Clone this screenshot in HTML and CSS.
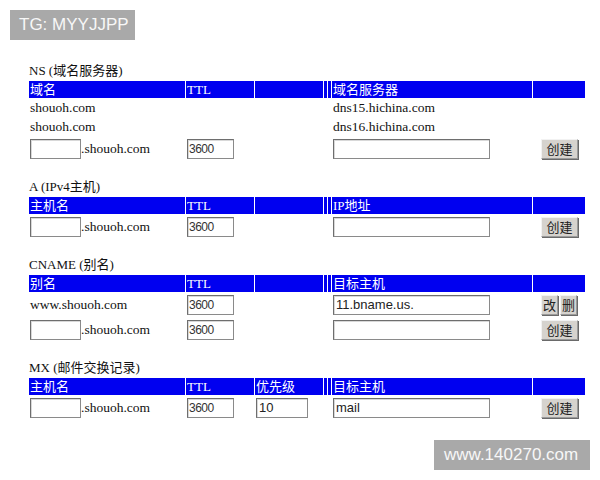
FILE: index.html
```html
<!DOCTYPE html>
<html>
<head>
<meta charset="utf-8">
<link rel="stylesheet" href="styles.css">
</head>
<body>
<div class="badge badge-top">TG: MYYJJPP</div>

<main class="page">
  <section class="sec">
    <div class="title">NS (域名服务器)</div>
    <div class="row head"><div>域名</div><div>TTL</div><div></div><div></div><div></div><div>域名服务器</div><div></div></div>
    <div class="row text"><div>shouoh.com</div><div></div><div></div><div></div><div></div><div>dns15.hichina.com</div><div></div></div>
    <div class="row text"><div>shouoh.com</div><div></div><div></div><div></div><div></div><div>dns16.hichina.com</div><div></div></div>
    <div class="row field">
      <div class="name"><span class="inp w-name"></span>.shouoh.com</div>
      <div><span class="inp w-ttl">3600</span></div><div></div><div></div><div></div>
      <div><span class="inp w-val"></span></div>
      <div class="btns"><span class="btn">创建</span></div>
    </div>
  </section>

  <section class="sec">
    <div class="title">A (IPv4主机)</div>
    <div class="row head"><div>主机名</div><div>TTL</div><div></div><div></div><div></div><div>IP地址</div><div></div></div>
    <div class="row field">
      <div class="name"><span class="inp w-name"></span>.shouoh.com</div>
      <div><span class="inp w-ttl">3600</span></div><div></div><div></div><div></div>
      <div><span class="inp w-val"></span></div>
      <div class="btns"><span class="btn">创建</span></div>
    </div>
  </section>

  <section class="sec">
    <div class="title">CNAME (别名)</div>
    <div class="row head"><div>别名</div><div>TTL</div><div></div><div></div><div></div><div>目标主机</div><div></div></div>
    <div class="row field">
      <div class="name">www.shouoh.com</div>
      <div><span class="inp w-ttl">3600</span></div><div></div><div></div><div></div>
      <div><span class="inp w-val big">11.bname.us.</span></div>
      <div class="btns"><span class="btn sm">改</span><span class="btn sm">删</span></div>
    </div>
    <div class="row field">
      <div class="name"><span class="inp w-name"></span>.shouoh.com</div>
      <div><span class="inp w-ttl">3600</span></div><div></div><div></div><div></div>
      <div><span class="inp w-val"></span></div>
      <div class="btns"><span class="btn">创建</span></div>
    </div>
  </section>

  <section class="sec">
    <div class="title">MX (邮件交换记录)</div>
    <div class="row head"><div>主机名</div><div>TTL</div><div>优先级</div><div></div><div></div><div>目标主机</div><div></div></div>
    <div class="row field">
      <div class="name"><span class="inp w-name"></span>.shouoh.com</div>
      <div><span class="inp w-ttl">3600</span></div>
      <div><span class="inp w-pri big">10</span></div><div></div><div></div>
      <div><span class="inp w-val big">mail</span></div>
      <div class="btns"><span class="btn">创建</span></div>
    </div>
  </section>
</main>

<div class="badge badge-bottom">www.140270.com</div>
</body>
</html>
```

FILE: styles.css
```css
html, body {
  margin: 0;
  padding: 0;
  background: #ffffff;
}

body {
  width: 600px;
  height: 480px;
  position: relative;
  overflow: hidden;
  font-family: "Liberation Serif", "Noto Sans CJK SC", serif;
  font-size: 13.5px;
  color: #111111;
}

.badge {
  position: absolute;
  background: #a9a9a9;
  color: #f7f7f7;
  font-family: "Liberation Sans", Arial, sans-serif;
  height: 30px;
  line-height: 30px;
  box-sizing: border-box;
}

.badge-top {
  left: 10px;
  top: 10px;
  width: 125px;
  padding-left: 9px;
  font-size: 17px;
}

.badge-bottom {
  left: 434px;
  top: 440px;
  width: 156px;
  padding-left: 10px;
  font-size: 17px;
}

.page {
  padding: 61px 0 0 29px;
}

.sec {
  margin-bottom: 16px;
}

.title {
  height: 20px;
  line-height: 20px;
  font-size: 13px;
  color: #111;
}

.row {
  display: grid;
  grid-template-columns: 156px 68px 68px 3px 3px 200px 52px;
  column-gap: 1px;
  margin-bottom: 1px;
}

.head {
  height: 17px;
}

.head > div {
  background: #0000f0;
  color: #ffffff;
  line-height: 17px;
  padding-left: 1px;
  white-space: nowrap;
  overflow: hidden;
  font-size: 13px;
}

.text {
  height: 18px;
  line-height: 18px;
}

.text > div {
  padding-left: 1px;
}

.field {
  height: 24px;
  align-items: center;
}

.field > div {
  display: flex;
  align-items: center;
  padding-left: 1px;
  white-space: nowrap;
}

.inp {
  display: inline-block;
  box-sizing: border-box;
  height: 20px;
  line-height: 18px;
  border: 1px solid #8a8a8a;
  border-top-color: #6e6e6e;
  border-left-color: #6e6e6e;
  box-shadow: inset 1px 1px 0 #d8d8d8;
  background: #ffffff;
  font-family: "Liberation Sans", Arial, sans-serif;
  font-size: 12px;
  color: #333;
  padding-left: 1px;
  letter-spacing: -0.5px;
}

.inp.big {
  font-size: 13px;
  letter-spacing: 0;
  padding-left: 2px;
  color: #222;
}

.w-name { width: 51px; }
.w-ttl { width: 47px; }
.w-pri { width: 52px; }
.w-val { width: 157px; }

.btns {
  padding-left: 8px !important;
}

.btn {
  display: inline-block;
  box-sizing: border-box;
  height: 20px;
  line-height: 18px;
  width: 37px;
  text-align: center;
  background: #d6d3ce;
  border: 1px solid #9a9a9a;
  border-top-color: #f2f2f2;
  border-left-color: #f2f2f2;
  box-shadow: 1px 1px 0 #6a6a6a;
  font-family: "Noto Sans CJK SC", sans-serif;
  font-size: 13px;
  color: #222;
}

.btn.sm {
  width: 17px;
  margin-right: 2px;
}
```
